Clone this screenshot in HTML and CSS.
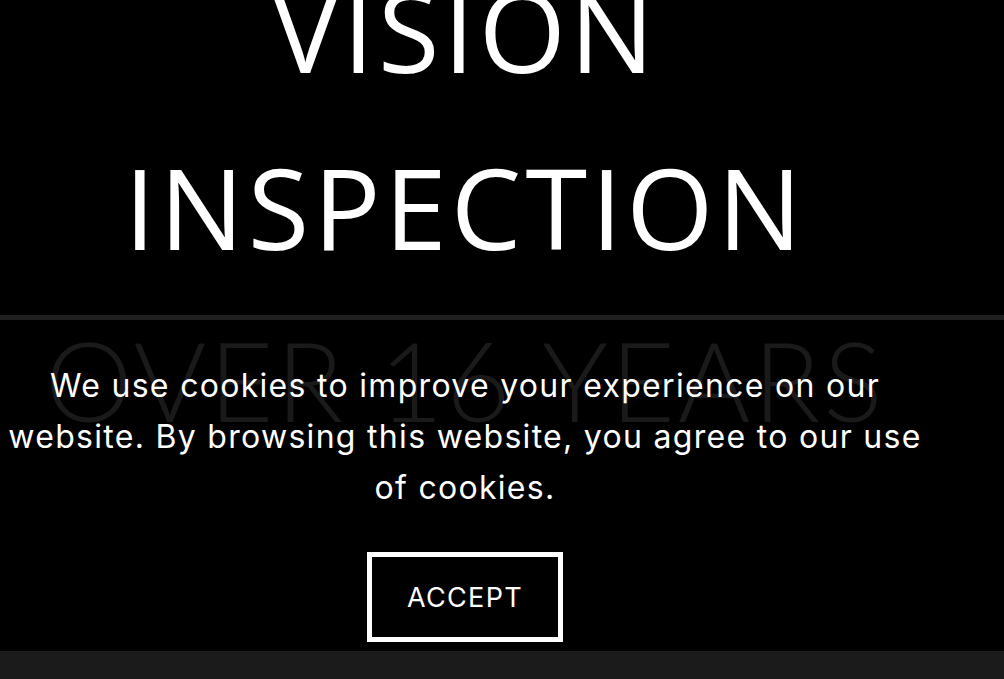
FILE: index.html
```html
<!DOCTYPE html>
<html lang="en">
<head>
<meta charset="utf-8">
<title>Vision Inspection</title>
<link rel="stylesheet" href="styles.css">
</head>
<body>
<div class="page">
  <header class="hero">
    <h1 class="hero-title">VISION<br>INSPECTION</h1>
  </header>
  <div class="rule"></div>
  <section class="years">
    <h2 class="years-title">OVER 16 YEARS</h2>
    <div class="cookie">
      <p class="cookie-text">We use cookies to improve your experience on our website. By browsing this website, you agree to our use of cookies.</p>
      <button class="cookie-btn" type="button">ACCEPT</button>
    </div>
  </section>
  <footer class="footer-bar"></footer>
</div>
</body>
</html>
```
FILE: styles.css
```css
html, body {
  margin: 0;
  padding: 0;
  background: #000;
  color: #fff;
  height: 679px;
  overflow: hidden;
  font-family: "Open Sans", "Liberation Sans", sans-serif;
}
.page {
  width: 1004px;
  display: flex;
  flex-direction: column;
}
.hero {
  margin-top: -59px;
  padding-bottom: 20px;
  width: 930px;
}
.hero-title {
  margin: 0;
  font-weight: 400;
  font-size: 112px;
  line-height: 177px;
  letter-spacing: 4px;
  text-align: center;
}
.rule {
  height: 5px;
  background: #1f1f1f;
}
.years {
  position: relative;
  height: 331px;
  width: 930px;
}
.years-title {
  margin: 0;
  padding-top: 4px;
  font-family: "Lato", sans-serif;
  font-weight: 300;
  font-size: 111px;
  line-height: 111px;
  letter-spacing: 2.7px;
  color: #1a1a1a;
  text-align: center;
}
.cookie {
  position: absolute;
  left: 0;
  top: 40px;
  width: 930px;
  display: flex;
  flex-direction: column;
  align-items: center;
}
.cookie-text {
  margin: 0;
  font-family: "Inter", sans-serif;
  font-size: 32px;
  line-height: 51px;
  letter-spacing: 1.3px;
  text-align: center;
}
.cookie-btn {
  margin-top: 39px;
  width: 196px;
  height: 90px;
  border: 5px solid #fff;
  background: #000;
  color: #fff;
  font-family: "Inter", sans-serif;
  font-size: 27px;
  letter-spacing: 1.3px;
  padding: 0;
}
.footer-bar {
  height: 28px;
  background: #1b1b1b;
}
```
